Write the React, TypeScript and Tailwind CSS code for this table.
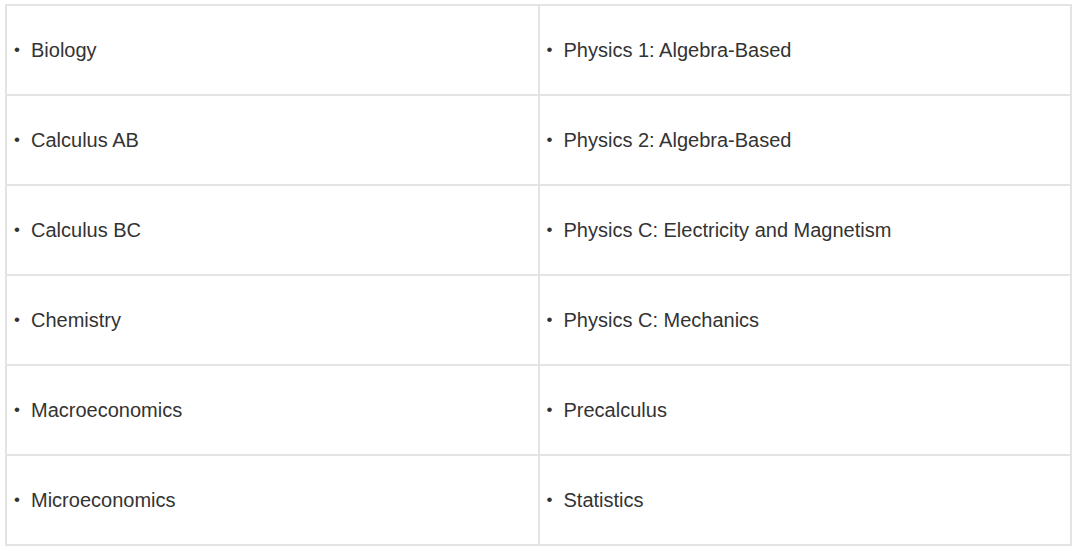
import React from "react";

const left = ["Biology", "Calculus AB", "Calculus BC", "Chemistry", "Macroeconomics", "Microeconomics"];
const right = [
  "Physics 1: Algebra-Based",
  "Physics 2: Algebra-Based",
  "Physics C: Electricity and Magnetism",
  "Physics C: Mechanics",
  "Precalculus",
  "Statistics",
];

function Cell({ text }: { text: string }) {
  return (
    <div className="h-[90px] border-r-2 border-b-2 border-[#e4e4e4] flex items-center pl-[7px]">
      <span className="w-[17px] text-[17px] text-[#333]">•</span>
      <span className="text-[20px] text-[#333]">{text}</span>
    </div>
  );
}

export default function App() {
  const cells: string[] = [];
  left.forEach((l, i) => {
    cells.push(l, right[i]);
  });
  return (
    <div className="w-[1080px] h-[551px] bg-white pt-[4px] pl-[5px]" style={{ fontFamily: '"Liberation Sans", Arial, sans-serif' }}>
      <div className="w-[1067px] border-l-2 border-t-2 border-[#e4e4e4] grid grid-cols-2">
        {cells.map((c, i) => (
          <Cell key={i} text={c} />
        ))}
      </div>
    </div>
  );
}
